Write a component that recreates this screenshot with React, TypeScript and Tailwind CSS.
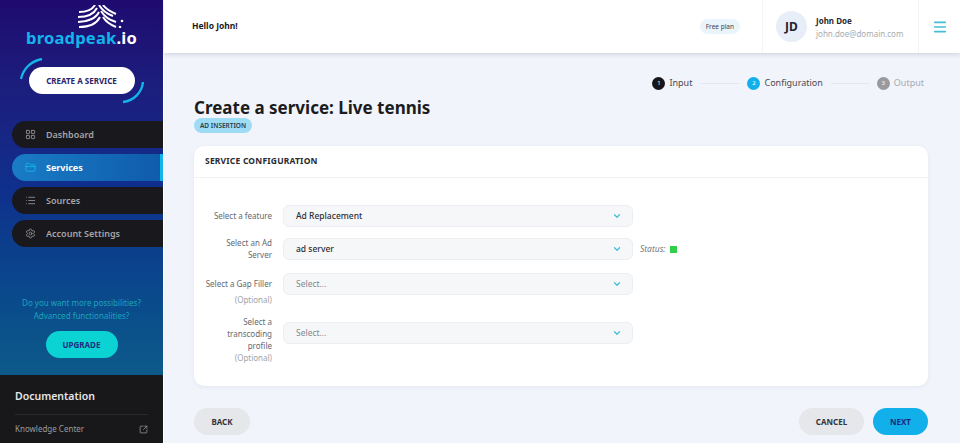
import { ChevronDown, FolderClosed, LayoutGrid, List, Menu, Settings, SquareArrowOutUpRight } from "lucide-react";

function Logo() {
	return (
		<svg width="50" height="23" viewBox="0 0 50 23" fill="none" stroke="#fff" strokeWidth="2" className="ml-[78px] block">
			<path d="M1 7 C8 7 14 5 17 0" />
			<path d="M0 12 C9 12 16 9 19 3" />
			<path d="M0 17 C10 17 18 13 21 7" />
			<path d="M1 22 C12 22 19 18 22 12" />
			<path d="M21 0 C24 5 29 9 35 11" />
			<path d="M25 0 C28 4 33 7 38 9" />
			<path d="M23 6 C26 11 31 15 38 17" />
			<path d="M25 12 C28 17 33 20 38 22" />
			<circle cx="44" cy="16" r="1.3" fill="#fff" stroke="none" />
			<circle cx="42" cy="22" r="1.3" fill="#fff" stroke="none" />
		</svg>
	);
}

function CreateButton() {
	return (
		<div className="relative mx-auto mt-[19px] h-[27px] w-[106px]">
			<svg width="130" height="46" viewBox="0 0 130 46" fill="none" stroke="#12b5ea" strokeWidth="2.4" className="absolute -left-[9px] -top-[9px]">
				<path d="M1 21 C3 11 11 3 22 1" />
				<path d="M123 24 C122 34 114 43 103 44" />
			</svg>
			<button className="relative flex h-full w-full items-center justify-center rounded-full bg-white text-[8px] font-bold text-[#2b2468]">
				CREATE A SERVICE
			</button>
		</div>
	);
}

const navItems = [
	{ label: "Dashboard", icon: LayoutGrid },
	{ label: "Services", icon: FolderClosed, active: true },
	{ label: "Sources", icon: List },
	{ label: "Account Settings", icon: Settings },
];

function Sidebar() {
	return (
		<aside className="flex h-[443px] w-[163px] shrink-0 flex-col">
			<div className="flex flex-1 flex-col bg-gradient-to-b from-[#1f0a70] via-[#0f2f8c] to-[#0d5a8a] pt-[5px]">
				<Logo />
				<div className="text-center text-[16.5px] leading-[20px] font-bold tracking-[0.2px] text-[#12b5ea]">
					broadpeak<span className="text-white">.io</span>
				</div>
				<CreateButton />
				<nav className="mt-[27px] ml-[12px] flex flex-col gap-[6px]">
					{navItems.map((item) => (
						<div
							key={item.label}
							className={
								item.active
									? "flex h-[27px] items-center gap-[10px] rounded-l-full border-r-[3px] border-[#12b5ea] bg-gradient-to-r from-[#1a7cc6] to-[#0f5cab] pl-[13px] text-[9px] font-bold text-white"
									: "flex h-[27px] items-center gap-[10px] rounded-l-full bg-[#18181d] pl-[13px] text-[9px] font-semibold text-[#a5a5a8]"
							}
						>
							<item.icon size={11} className={item.active ? "text-[#12b5ea]" : "text-[#8c8c90]"} />
							{item.label}
						</div>
					))}
				</nav>
				<p className="mt-[49px] text-center text-[8px] leading-[13px] text-[#1ba3bf]">
					Do you want more possibilities?
					<br />
					Advanced functionalities?
				</p>
				<button className="mx-auto mt-[9px] h-[27px] w-[72px] rounded-full bg-[#0bd3d3] text-[8px] font-bold text-[#1f2a80]">
					UPGRADE
				</button>
			</div>
			<div className="h-[68px] bg-[#18181b] px-[15px] pt-[13px]">
				<div className="border-b border-[#2a2a2e] pb-[10px] text-[10.5px] leading-[16px] font-semibold text-[#e6e6e6]">
					Documentation
				</div>
				<div className="mt-[8px] flex items-center justify-between text-[8px] text-[#9a9a9d]">
					Knowledge Center
					<SquareArrowOutUpRight size={9} />
				</div>
			</div>
		</aside>
	);
}

function Header() {
	return (
		<header className="relative z-10 flex h-[53px] items-center bg-white pl-[28px] shadow-[0_1px_5px_rgba(60,70,100,0.22)]">
			<div className="flex-1 text-[8.5px] font-bold text-[#1a1a1f]">Hello John!</div>
			<div className="mr-[22px] rounded-full bg-[#eaf4fb] px-[6px] py-[3px] text-[6.5px] leading-[9px] text-[#445]">Free plan</div>
			<div className="flex h-full w-[157px] items-center border-x border-[#f3f4f7] pl-[13px]">
				<div className="flex h-[31px] w-[31px] items-center justify-center rounded-full bg-[#e8eef7] text-[12px] font-bold text-[#22222a]">
					JD
				</div>
				<div className="ml-[9px]">
					<div className="text-[8px] leading-[13px] font-bold text-[#2a2a30]">John Doe</div>
					<div className="text-[8px] leading-[13px] text-[#a8abb0]">john.doe@domain.com</div>
				</div>
			</div>
			<div className="flex w-[41px] justify-center">
				<Menu size={16} strokeWidth={2.4} className="text-[#45bcd8]" />
			</div>
		</header>
	);
}

function Stepper() {
	return (
		<div className="flex h-[20px] items-center justify-end pr-[4px] text-[9px]">
			<span className="flex h-[13px] w-[13px] items-center justify-center rounded-full bg-[#17171b] text-[6px] text-white">1</span>
			<span className="ml-[4px] text-[#4a4a50]">Input</span>
			<span className="mx-[8px] h-px w-[39px] bg-[#e4e7ee]" />
			<span className="flex h-[13px] w-[13px] items-center justify-center rounded-full bg-[#12b0ea] text-[6px] text-white">2</span>
			<span className="ml-[4px] text-[#4a4a50]">Configuration</span>
			<span className="mx-[8px] h-px w-[38px] bg-[#e4e7ee]" />
			<span className="flex h-[13px] w-[13px] items-center justify-center rounded-full bg-[#9a9a9e] text-[6px] text-white">3</span>
			<span className="ml-[4px] text-[#a8abb0]">Output</span>
		</div>
	);
}

function Field({
	label,
	optional,
	value,
	placeholder,
	labelWidth = "w-[78px]",
	labelClass = "",
	optionalClass = "mt-[4px]",
	selectClass = "",
	children,
}: {
	label: string;
	optional?: boolean;
	value: string;
	placeholder?: boolean;
	labelWidth?: string;
	labelClass?: string;
	optionalClass?: string;
	selectClass?: string;
	children?: React.ReactNode;
}) {
	return (
		<div className="flex items-start">
			<div className={`flex w-[78px] shrink-0 justify-end ${labelClass}`}>
				<div className={`${labelWidth} text-right text-[8px] leading-[12px] text-[#66696e]`}>
					{label}
					{optional && <div className={`${optionalClass} text-[#a0a3a8]`}>(Optional)</div>}
				</div>
			</div>
			<div
				className={`ml-[11px] flex h-[22px] w-[350px] shrink-0 items-center justify-between rounded-[6px] border border-[#eceef2] bg-[#f6f7f9] pr-[10px] pl-[12px] text-[8.5px] ${selectClass} ${
					placeholder ? "text-[#85888d]" : "font-medium text-[#2e2e33]"
				}`}
			>
				{value}
				<ChevronDown size={10} strokeWidth={3} className="text-[#45bcd8]" />
			</div>
			{children}
		</div>
	);
}

function ConfigCard() {
	return (
		<section className="mt-[13px] h-[240px] rounded-[10px] bg-white shadow-[0_1px_4px_rgba(60,70,100,0.08)]">
			<div className="flex h-[32px] items-center border-b border-[#eff1f5] pl-[11px] text-[8.5px] font-bold tracking-[0.2px] text-[#2a2a30]">
				SERVICE CONFIGURATION
			</div>
			<div className="flex flex-col gap-[11px] pt-[27px]">
				<Field label="Select a feature" value="Ad Replacement" labelClass="pt-[5px]" />
				<Field label="Select an Ad Server" labelWidth="w-[62px]" value="ad server" labelClass="-mt-px">
					<div className="ml-[7px] flex h-[22px] items-center text-[8.5px] text-[#77797e] italic">
						Status:
						<span className="ml-[4px] h-[7px] w-[7px] bg-[#2fcf4a]" />
					</div>
				</Field>
				<div className="mt-px">
					<Field label="Select a Gap Filler" optional value="Select..." placeholder labelClass="pt-[5px]" />
				</div>
				<div className="-mt-[2px]">
					<Field
						label="Select a transcoding profile"
						optional
						labelWidth="w-[52px]"
						labelClass="pt-px"
						optionalClass="mt-0"
						value="Select..."
						placeholder
						selectClass="mt-[7px]"
					/>
				</div>
			</div>
		</section>
	);
}

export default function App() {
	return (
		<div className="flex h-[443px] w-[960px] overflow-hidden bg-[#f1f4fb] font-['Noto_Sans',sans-serif]">
			<Sidebar />
			<main className="flex min-w-0 flex-1 flex-col border-l border-white">
				<Header />
				<div className="pt-[20px] pr-[32px] pl-[30px]">
					<Stepper />
					<h1 className="mt-[4px] text-[17px] leading-[21px] font-bold text-[#1b1b20]">Create a service: Live tennis</h1>
					<span className="block w-fit rounded-full bg-[#9edcf5] px-[6px] text-[6.5px] leading-[15px] font-semibold text-[#2a3a48]">AD INSERTION</span>
					<ConfigCard />
					<div className="mt-[22px] flex items-center gap-[9px]">
						<button className="mr-auto h-[27px] w-[56px] rounded-full bg-[#e6e7ea] text-[8px] font-bold text-[#33333a]">BACK</button>
						<button className="h-[27px] w-[65px] rounded-full bg-[#e6e7ea] text-[8px] font-bold text-[#33333a]">CANCEL</button>
						<button className="h-[27px] w-[55px] rounded-full bg-[#12b0ea] text-[8px] font-bold text-[#1f2a80]">NEXT</button>
					</div>
				</div>
			</main>
		</div>
	);
}
